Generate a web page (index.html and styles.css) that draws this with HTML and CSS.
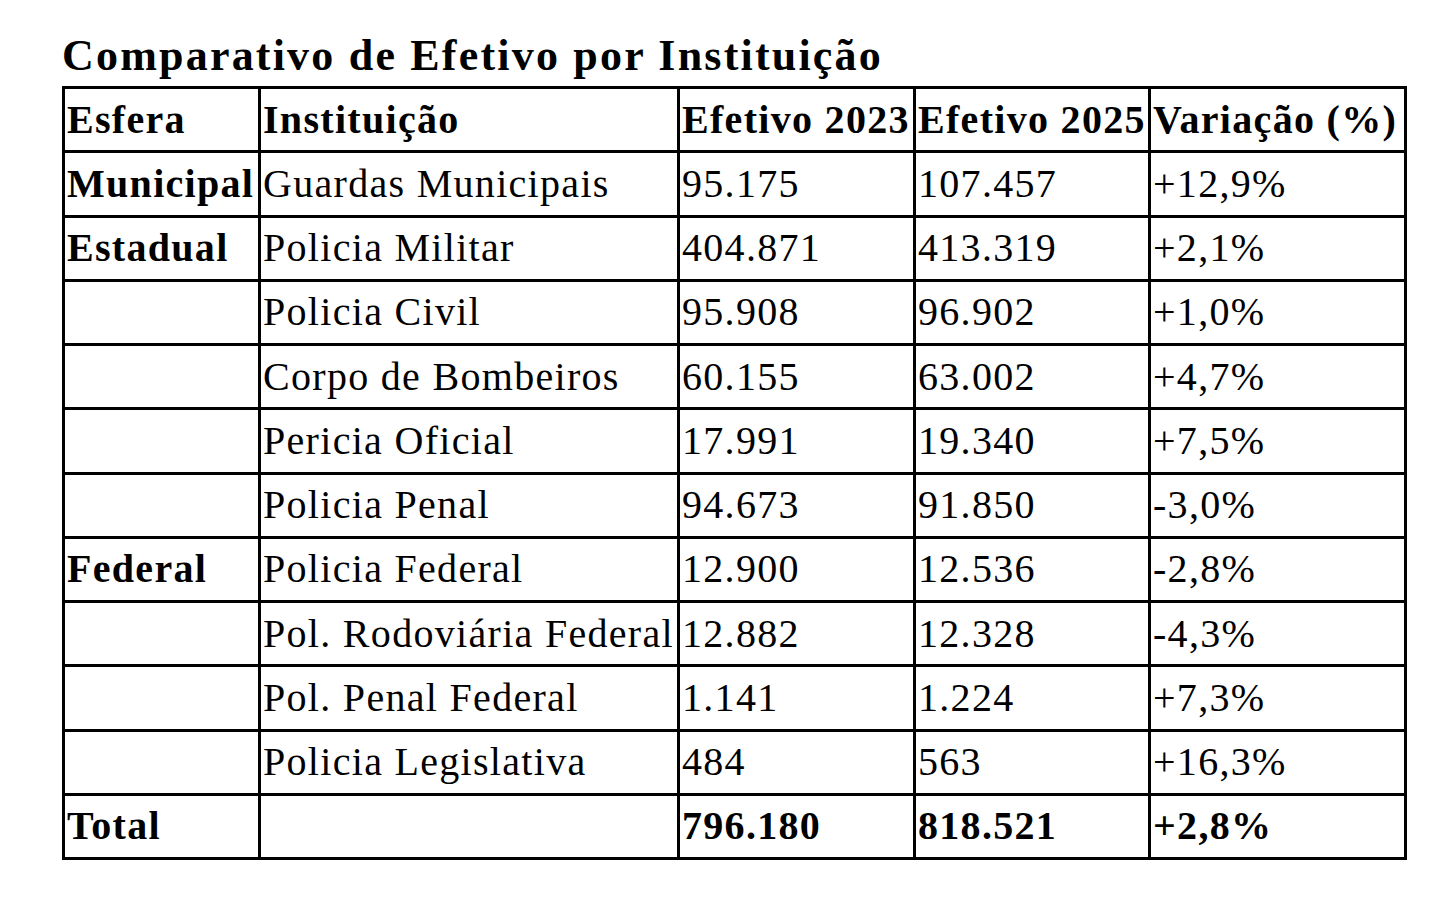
FILE: index.html
```html
<!DOCTYPE html>
<html lang="pt">
<head>
<meta charset="utf-8">
<title>Comparativo de Efetivo por Instituição</title>
<link rel="stylesheet" href="styles.css">
</head>
<body>
<div class="page">
  <h1 class="title">Comparativo de Efetivo por Instituição</h1>
  <table class="grid">
    <colgroup>
      <col class="c1"><col class="c2"><col class="c3"><col class="c4"><col class="c5">
    </colgroup>
    <thead>
      <tr class="head"><th>Esfera</th><th>Instituição</th><th>Efetivo 2023</th><th>Efetivo 2025</th><th>Variação (%)</th></tr>
    </thead>
    <tbody>
      <tr><th>Municipal</th><td>Guardas Municipais</td><td>95.175</td><td>107.457</td><td>+12,9%</td></tr>
      <tr><th>Estadual</th><td>Policia Militar</td><td>404.871</td><td>413.319</td><td>+2,1%</td></tr>
      <tr><th></th><td>Policia Civil</td><td>95.908</td><td>96.902</td><td>+1,0%</td></tr>
      <tr><th></th><td>Corpo de Bombeiros</td><td>60.155</td><td>63.002</td><td>+4,7%</td></tr>
      <tr><th></th><td>Pericia Oficial</td><td>17.991</td><td>19.340</td><td>+7,5%</td></tr>
      <tr><th></th><td>Policia Penal</td><td>94.673</td><td>91.850</td><td>-3,0%</td></tr>
      <tr><th>Federal</th><td>Policia Federal</td><td>12.900</td><td>12.536</td><td>-2,8%</td></tr>
      <tr><th></th><td>Pol. Rodoviária Federal</td><td>12.882</td><td>12.328</td><td>-4,3%</td></tr>
      <tr><th></th><td>Pol. Penal Federal</td><td>1.141</td><td>1.224</td><td>+7,3%</td></tr>
      <tr><th></th><td>Policia Legislativa</td><td>484</td><td>563</td><td>+16,3%</td></tr>
      <tr class="total"><th>Total</th><td></td><td>796.180</td><td>818.521</td><td>+2,8%</td></tr>
    </tbody>
  </table>
</div>
</body>
</html>
```

FILE: styles.css
```css
html, body {
  margin: 0;
  padding: 0;
  background: #ffffff;
}

.page {
  padding: 34px 0 0 62px;
  font-family: "Liberation Serif", "Times New Roman", serif;
  color: #000;
}

.title {
  margin: 0 0 8px 0;
  font-size: 44px;
  line-height: 44px;
  font-weight: bold;
  letter-spacing: 2.2px;
  white-space: nowrap;
}

.grid {
  border-collapse: collapse;
  table-layout: fixed;
  width: 1342px;
  font-size: 40px;
  letter-spacing: 1.3px;
}

.c1 { width: 196px; }
.c2 { width: 419px; }
.c3 { width: 236px; }
.c4 { width: 235px; }
.c5 { width: 256px; }

.grid th,
.grid td {
  border: 3px solid #000;
  height: 61.25px;
  padding: 0 0 0 2px;
  text-align: left;
  vertical-align: middle;
  white-space: nowrap;
  overflow: hidden;
  line-height: 1;
}

.grid th {
  font-weight: bold;
}

.grid td {
  font-weight: normal;
}

.grid .total td {
  font-weight: bold;
}
```
